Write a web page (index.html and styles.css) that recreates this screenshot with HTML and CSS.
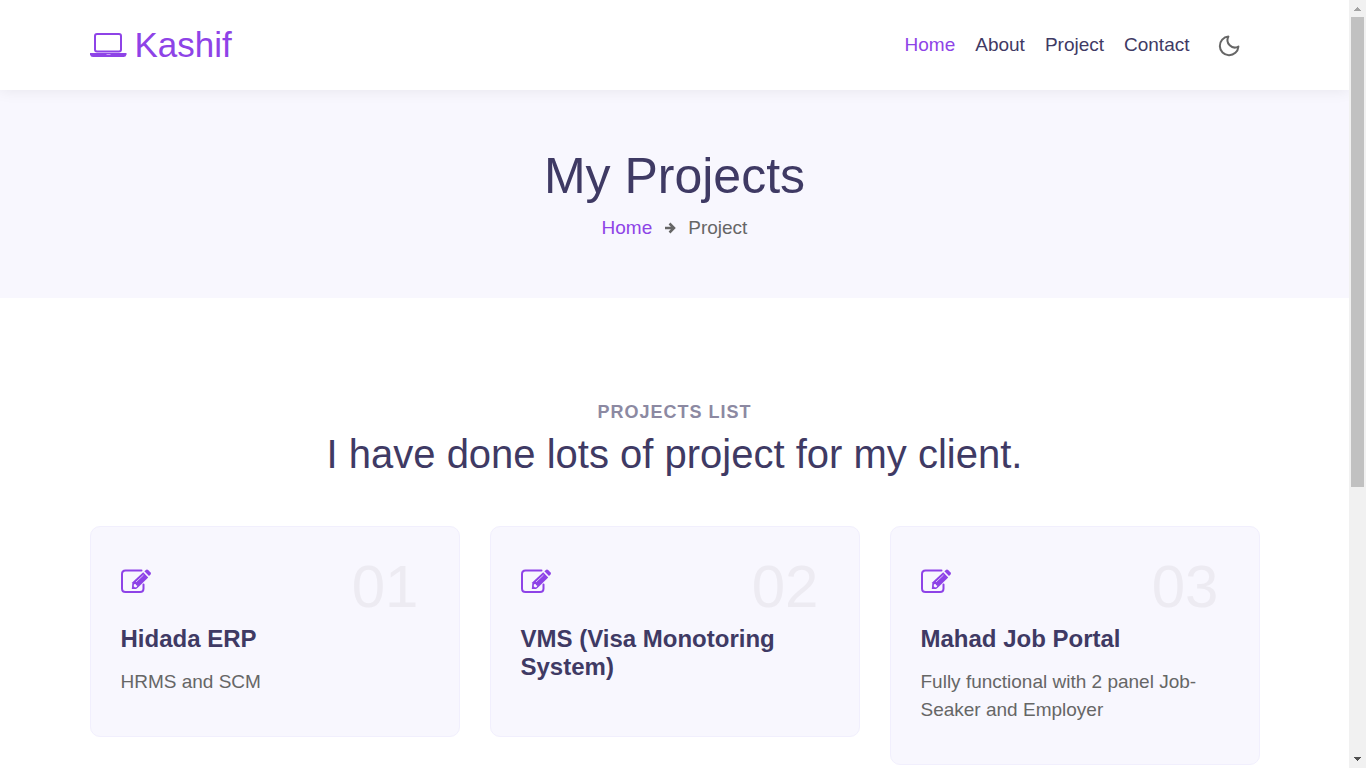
FILE: index.html
```html
<!DOCTYPE html>
<html lang="en">
<head>
<meta charset="utf-8">
<meta name="viewport" content="width=device-width, initial-scale=1">
<title>Kashif - My Projects</title>
<link rel="stylesheet" href="styles.css">
</head>
<body>
<svg class="sprite" aria-hidden="true">
  <symbol id="icon-edit" viewBox="0 0 31 28">
    <path d="M20.500 3.500H4.500Q1 3.500 1 7V21.500Q1 25 4.500 25H19Q22.500 25 22.500 21.500V17.500" fill="none" stroke="currentColor" stroke-width="2" stroke-linecap="round"/>
    <path fill="currentColor" d="M10.800 22L11.400 15.300L22.200 5.300L27.200 10.500L16.700 20.800L15 22Z"/>
    <path fill="currentColor" d="M23.400 4.200L25.200 2.700Q26.200 2 27.200 2.900L29.600 5.400Q30.400 6.400 29.500 7.400L28 9Z"/>
    <path d="M15 15L22.500 8" fill="none" stroke="#d9c2f8" stroke-width="1"/>
    <path fill="#f8f7fe" d="M13 17.200L14.700 16.900L15 18.300L16.300 18.600L15.800 20L14 20.400L12.700 19.200Z"/>
  </symbol>
</svg>
<div class="window">
  <div class="page">
    <header class="header">
      <div class="container header-row">
        <a class="logo" href="#">
          <svg class="logo-icon" viewBox="0 0 37 24" aria-hidden="true">
            <rect x="5" y="1" width="26" height="17.500" rx="2" fill="none" stroke="currentColor" stroke-width="2"/>
            <path fill="currentColor" d="M0 20H36.500V21.500Q36 24 33.500 24H3Q.5 24 0 21.500Z"/>
            <path d="M16.500 21.500H20.500" stroke="#c79cf4" stroke-width="1"/>
          </svg>
          <span>Kashif</span>
        </a>
        <div class="header-tools">
          <nav class="nav" aria-label="Main">
            <a class="nav-link active" href="#">Home</a>
            <a class="nav-link" href="#">About</a>
            <a class="nav-link" href="#projects">Project</a>
            <a class="nav-link" href="#">Contact</a>
          </nav>
          <button class="theme-toggle" type="button" aria-label="Dark mode">
            <svg viewBox="0 0 22 22" aria-hidden="true">
              <path d="M10.400 1.600A9.300 9.300 0 1 0 20.400 11.600A7.400 7.400 0 0 1 10.400 1.600Z" fill="none" stroke="currentColor" stroke-width="2" stroke-linejoin="round"/>
            </svg>
          </button>
        </div>
      </div>
    </header>
    <main>
      <section class="hero">
        <h1 class="hero-title">My Projects</h1>
        <nav class="breadcrumb" aria-label="Breadcrumb">
          <a class="breadcrumb-link" href="#">Home</a>
          <svg class="breadcrumb-arrow" viewBox="0 0 12 12" aria-hidden="true">
            <path d="M1 6H9.500M5.500 1.500L10 6L5.500 10.500" fill="none" stroke="currentColor" stroke-width="2.500"/>
          </svg>
          <span>Project</span>
        </nav>
      </section>
      <section class="projects container" id="projects">
        <p class="eyebrow">Projects list</p>
        <h2 class="section-title">I have done lots of project for my client.</h2>
        <div class="cards">
          <article class="card">
            <div class="card-top"><svg class="card-icon" aria-hidden="true"><use href="#icon-edit"/></svg><span class="card-number">01</span></div>
            <h3 class="card-title">Hidada ERP</h3>
            <p class="card-text">HRMS and SCM</p>
          </article>
          <article class="card">
            <div class="card-top"><svg class="card-icon" aria-hidden="true"><use href="#icon-edit"/></svg><span class="card-number">02</span></div>
            <h3 class="card-title">VMS (Visa Monotoring System)</h3>
          </article>
          <article class="card">
            <div class="card-top"><svg class="card-icon" aria-hidden="true"><use href="#icon-edit"/></svg><span class="card-number">03</span></div>
            <h3 class="card-title">Mahad Job Portal</h3>
            <p class="card-text">Fully functional with 2 panel Job-Seaker and Employer</p>
          </article>
        </div>
      </section>
    </main>
  </div>
  <div class="scrollbar" aria-hidden="true">
    <svg class="scroll-arrow up" viewBox="0 0 17 17"><path fill="currentColor" d="M8 7h1v1h1v1h1v1h1v1H5v-1h1V9h1V8h1z"/></svg>
    <div class="scroll-track"><div class="scroll-thumb"></div></div>
    <svg class="scroll-arrow" viewBox="0 0 17 17"><path fill="currentColor" d="M5 6h7v1h-1v1h-1v1H9v1H8V9H7V8H6V7H5z"/></svg>
  </div>
</div>
</body>
</html>
```
FILE: styles.css
```css
:root {
  --purple: #8e43e7;
  --navy: #3f3a64;
  --gray: #666;
  --tint: #f8f7fe;
}

* {
  box-sizing: border-box;
}

body,
h1,
h2,
h3,
p {
  margin: 0;
}

body {
  background: #fff;
  color: var(--gray);
  font: 19px/28px "Liberation Sans", Arial, sans-serif;
}

a {
  text-decoration: none;
}

.sprite {
  display: none;
}

.window {
  display: grid;
  grid-template-columns: minmax(0, 1fr) 17px;
  height: 100vh;
}

.page {
  overflow: hidden;
}

.container {
  max-width: 1200px;
  margin: 0 auto;
  padding: 0 15px;
}

.header {
  position: relative;
  background: #fff;
  box-shadow: 0 0 15px rgba(0, 0, 0, 0.08);
}

.header-row {
  display: flex;
  align-items: center;
  justify-content: space-between;
  min-height: 90px;
}

.logo {
  display: flex;
  align-items: center;
  gap: 8px;
  color: var(--purple);
  font-size: 35px;
  line-height: 42px;
}

.logo-icon {
  width: 37px;
  height: 24px;
}

.header-tools {
  display: flex;
  align-items: center;
  gap: 28px;
  padding-right: 20px;
}

.nav {
  display: flex;
  flex-wrap: wrap;
  gap: 20px;
}

.nav-link {
  color: var(--navy);
}

.nav-link.active {
  color: var(--purple);
}

.theme-toggle {
  display: flex;
  padding: 2px 0 0;
  border: 0;
  background: none;
  color: var(--gray);
  cursor: pointer;
}

.theme-toggle svg {
  width: 22px;
  height: 22px;
}

.hero {
  padding: 56px 15px;
  background: var(--tint);
  text-align: center;
}

.hero-title {
  margin-bottom: 8px;
  color: var(--navy);
  font-size: 50px;
  font-weight: 400;
  line-height: 60px;
}

.breadcrumb {
  display: flex;
  align-items: center;
  justify-content: center;
  gap: 12px;
}

.breadcrumb-link {
  color: var(--purple);
}

.breadcrumb-arrow {
  width: 12px;
  height: 12px;
}

.projects {
  padding-top: 100px;
  padding-bottom: 100px;
}

.eyebrow {
  margin-bottom: 4px;
  color: #8c89a2;
  font-size: 18px;
  font-weight: 700;
  letter-spacing: 1px;
  text-align: center;
  text-transform: uppercase;
}

.section-title {
  margin-bottom: 48px;
  color: var(--navy);
  font-size: 40px;
  font-weight: 400;
  line-height: 48px;
  text-align: center;
}

.cards {
  display: grid;
  grid-template-columns: repeat(3, minmax(0, 1fr));
  align-items: start;
  gap: 30px;
}

.card {
  padding: 40px 30px;
  border: 1px solid #f1effd;
  border-radius: 10px;
  background: var(--tint);
}

.card-top {
  display: flex;
  justify-content: space-between;
  margin-bottom: 18px;
  padding-right: 10px;
}

.card-icon {
  width: 31px;
  height: 28px;
  color: var(--purple);
}

.card-number {
  color: #edebf2;
  font-size: 60px;
  line-height: 40px;
}

.card-title {
  margin-bottom: 15px;
  color: var(--navy);
  font-size: 24px;
  font-weight: 700;
  line-height: 28px;
}

.scrollbar {
  display: flex;
  flex-direction: column;
  background: #f1f1f1;
}

.scroll-arrow {
  width: 17px;
  height: 17px;
  color: #505050;
}

.scroll-arrow.up {
  color: #a3a3a3;
}

.scroll-track {
  flex: 1;
  padding: 0 2px;
}

.scroll-thumb {
  height: 64%;
  background: #c1c1c1;
}

@media (max-width: 900px) {
  .cards {
    grid-template-columns: minmax(0, 1fr);
  }
}
```
